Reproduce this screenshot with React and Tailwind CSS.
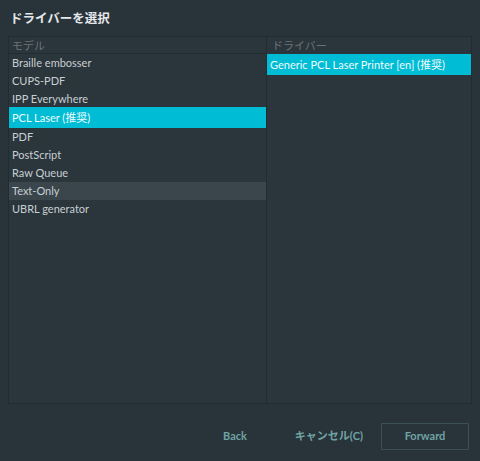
import React, { useState } from 'react'

const models = [
  'Braille embosser',
  'CUPS-PDF',
  'IPP Everywhere',
  'PCL Laser (推奨)',
  'PDF',
  'PostScript',
  'Raw Queue',
  'Text-Only',
  'UBRL generator',
]

const drivers = ['Generic PCL Laser Printer [en] (推奨)']

const font = { fontFamily: 'Lato, "Noto Sans CJK JP", sans-serif' }

export default function App() {
  const [model, setModel] = useState(3)
  const [hover] = useState(7)

  return (
    <div style={font} className="w-[480px] h-[461px] bg-[#29333a] flex flex-col text-[#c8cfd2]">
      {/* Title */}
      <div className="h-[36px] pl-[10px] pt-[10px] text-[12.5px] font-bold text-[#e3e7e9] leading-[18px]">
        ドライバーを選択
      </div>

      {/* Lists */}
      <div className="mx-[8px] h-[368px] border border-[#222b31] bg-[#2b353c] flex">
        <div className="w-[257px] flex flex-col">
          <div className="h-[17px] border-b border-[#222b31] pl-[3px] text-[11px] leading-[17px] text-[#6b7479]">
            モデル
          </div>
          {models.map((m, i) => (
            <div
              key={m}
              onClick={() => setModel(i)}
              className={`pl-[3px] text-[11px] ${
                i === model
                  ? 'h-[21px] leading-[21px] -mt-px bg-[#00bcd4] text-[#eefbfd]'
                  : i === hover
                  ? 'h-[18px] leading-[18px] bg-[#3a464c]'
                  : 'h-[18px] leading-[18px]'
              }`}
            >
              {m}
            </div>
          ))}
        </div>
        <div className="w-px bg-[#222b31]" />
        <div className="flex-1 flex flex-col">
          <div className="h-[17px] pl-[5px] text-[11px] leading-[17px] text-[#6b7479]">ドライバー</div>
          {drivers.map(d => (
            <div key={d} className="h-[21px] pl-[3px] text-[11px] leading-[21px] bg-[#00bcd4] text-[#eefbfd]">
              {d}
            </div>
          ))}
        </div>
      </div>

      {/* Buttons */}
      <div className="flex-1 flex items-center justify-end pr-[11px] pt-[7px] text-[11px] font-bold text-[#6fa3a4]">
        <button className="w-[80px] h-[27px] mr-[10px]">Back</button>
        <button className="w-[88px] h-[27px] mr-[8px]">キャンセル(C)</button>
        <button className="w-[88px] h-[27px] border border-[#3d5155] rounded-[1px]">Forward</button>
      </div>
    </div>
  )
}
